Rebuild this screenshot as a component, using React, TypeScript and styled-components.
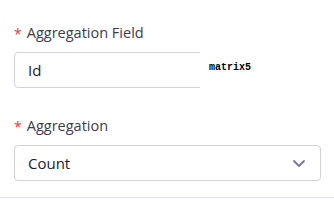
import React from 'react';
import styled, { createGlobalStyle } from 'styled-components';

const GlobalStyle = createGlobalStyle`
  html, body {
    margin: 0;
    padding: 0;
    background: #ffffff;
  }
  body {
    font-family: "Open Sans", "Noto Sans", sans-serif;
  }
`;

const Page = styled.div`
  position: relative;
  width: 334px;
  height: 206px;
  overflow: hidden;
  background: #ffffff;
`;

const Form = styled.div`
  display: flex;
  flex-direction: column;
  gap: 28px;
  padding: 23px 13px 16px 14px;
  border-bottom: 1px solid #e4e2f0;
`;

const Field = styled.div`
  display: flex;
  flex-direction: column;
  gap: 9px;
`;

const Label = styled.label`
  display: flex;
  align-items: center;
  font-size: 14.5px;
  line-height: 20px;
  color: #3c3b4c;
`;

const Required = styled.span`
  color: #e03a3e;
  font-size: 14px;
  margin-right: 5px;
  position: relative;
  top: 1px;
`;

const Box = styled.div`
  display: flex;
  align-items: center;
  justify-content: space-between;
  height: 36px;
  box-sizing: border-box;
  padding: 0 13px;
  border: 1px solid #d3d2da;
  border-radius: 4px;
  font-size: 15px;
  color: #1c1a36;
`;

const Chevron = styled.svg`
  width: 14px;
  height: 14px;
  color: #7b70a9;
  margin-right: 1px;
`;

const Overlay = styled.div`
  position: absolute;
  left: 200px;
  top: 46px;
  width: 134px;
  height: 46px;
  background: #ffffff;
  padding: 17px 0 0 9px;
  box-sizing: border-box;
  font-family: "Liberation Mono", "DejaVu Sans Mono", monospace;
  font-weight: bold;
  font-size: 10px;
  line-height: 10px;
  color: #000000;
`;

export default function App() {
  return (
    <Page>
      <GlobalStyle />
      <Form>
        <Field>
          <Label>
            <Required>*</Required>Aggregation Field
          </Label>
          <Box>Id</Box>
        </Field>
        <Field>
          <Label>
            <Required>*</Required>Aggregation
          </Label>
          <Box>
            Count
            <Chevron viewBox="0 0 14 14" fill="none">
              <path
                d="M2 5l5 5 5-5"
                stroke="currentColor"
                strokeWidth="1.8"
                strokeLinecap="round"
                strokeLinejoin="round"
              />
            </Chevron>
          </Box>
        </Field>
      </Form>
      <Overlay>matrix5</Overlay>
    </Page>
  );
}
